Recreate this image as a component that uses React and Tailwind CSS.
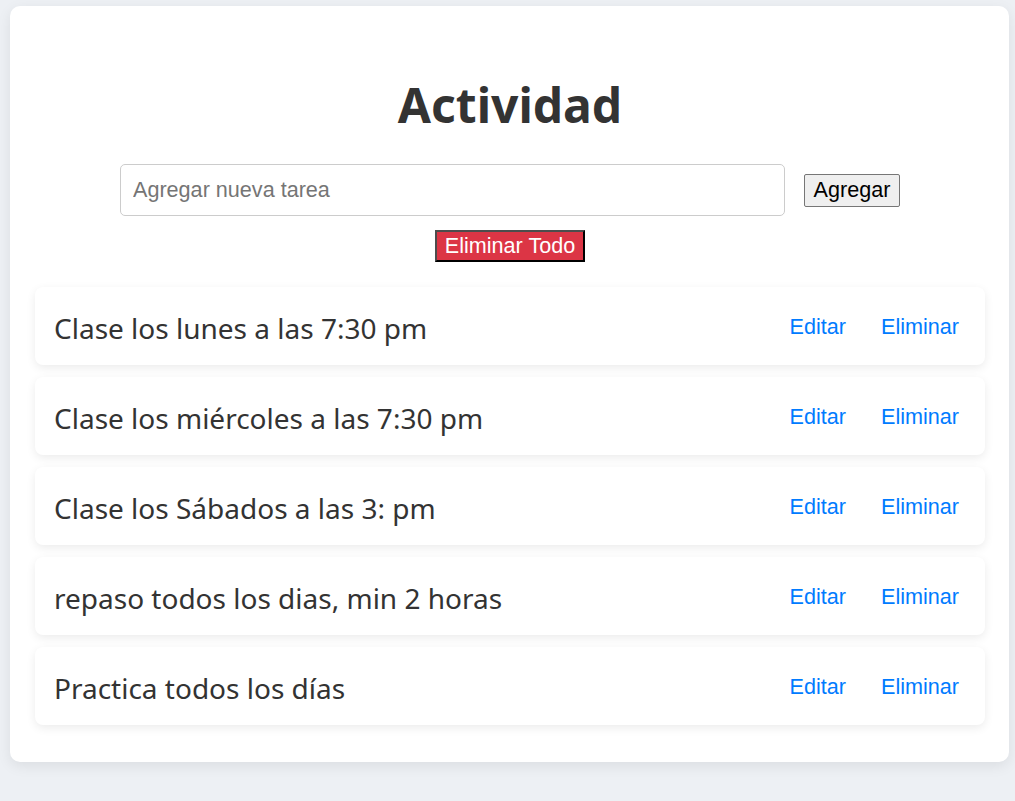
import React, { useState } from 'react';

const initialTasks = [
  'Clase los lunes a las 7:30 pm',
  'Clase los miércoles a las 7:30 pm',
  'Clase los Sábados a las 3: pm',
  'repaso todos los dias, min 2 horas',
  'Practica todos los días',
];

const App = () => {
  const [tasks, setTasks] = useState(initialTasks);
  const [newTask, setNewTask] = useState('');

  const addTask = () => {
    if (!newTask.trim()) return;
    setTasks([...tasks, newTask.trim()]);
    setNewTask('');
  };

  return (
    <div className="min-h-[801px] bg-[#edf0f4] pt-[6px] pl-[10px] pr-[6px] font-['Liberation_Sans',Arial,sans-serif]">
      <div className="bg-white rounded-[10px] shadow-[0_4px_14px_rgba(0,0,0,0.08)] pl-[25px] pr-[24px] pt-[25px] pb-[25px]">
        {/* Title */}
        <h1 className="text-center text-[48px] leading-[64px] font-bold text-[#333] mt-[42px] mb-[27px] font-['Noto_Sans',sans-serif]">
          Actividad
        </h1>

        {/* New task */}
        <div className="flex justify-center items-center gap-[19px]">
          <input
            type="text"
            placeholder="Agregar nueva tarea"
            value={newTask}
            onChange={(e) => setNewTask(e.target.value)}
            className="w-[665px] h-[52px] px-[12px] text-[21.6px] border border-[#ccc] rounded-[5px] outline-none placeholder:text-[#757575]"
          />
          <button
            onClick={addTask}
            className="h-[33px] w-[96px] text-[21.6px] leading-none bg-[#efefef] border border-[#767676] rounded-[2px] text-black"
          >
            Agregar
          </button>
        </div>

        <div className="flex justify-center mt-[14px]">
          <button
            onClick={() => setTasks([])}
            className="h-[32px] w-[150px] text-[21.6px] leading-none text-white bg-[#dc3545] border-2 border-solid border-[#4d4d4d] border-b-black border-r-black"
          >
            Eliminar Todo
          </button>
        </div>

        {/* Task list */}
        <ul className="mt-[25px]">
          {tasks.map((task, i) => (
            <li
              key={i}
              className="flex items-center justify-between h-[78px] mb-[12px] pl-[19px] pr-[16px] pt-[3px] bg-white rounded-[8px] shadow-[0_3px_10px_rgba(0,0,0,0.08)]"
            >
              <span className="text-[28px] text-[#333] font-['Noto_Sans',sans-serif]">{task}</span>
              <div className="flex items-center">
                <button className="text-[21.6px] text-[#007bff] px-[10px]">Editar</button>
                <button className="text-[21.6px] text-[#007bff] ml-[15px] px-[10px]">Eliminar</button>
              </div>
            </li>
          ))}
        </ul>
      </div>
    </div>
  );
};

export default App;
